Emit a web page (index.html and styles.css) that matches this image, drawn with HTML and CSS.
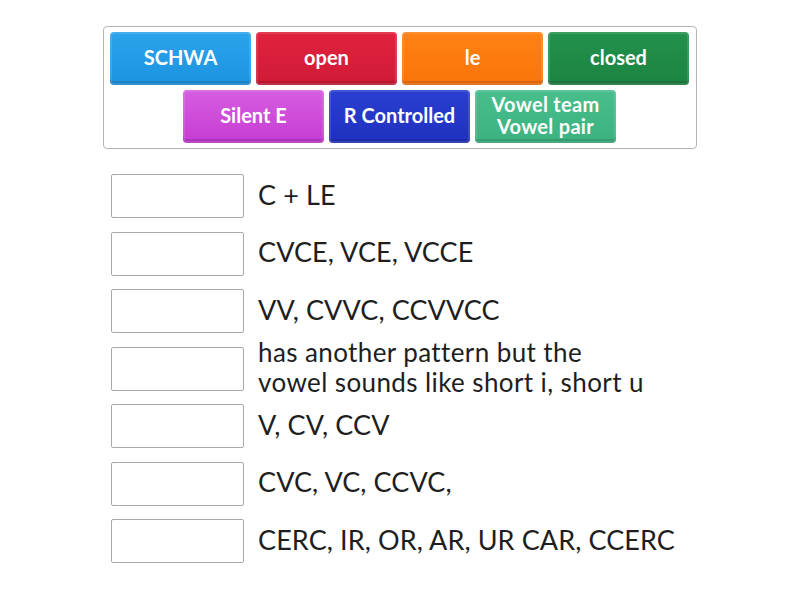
FILE: index.html
```html
<!DOCTYPE html>
<html lang="en">
<head>
    <meta charset="UTF-8">
    <meta name="viewport" content="width=device-width, initial-scale=1.0">
    <title>Match up</title>
    <link rel="stylesheet" href="styles.css">
</head>
<body>
    <div class="page">
        <!-- Bandeja de respostas -->
        <div class="tray">
            <div class="tray-row">
                <div class="tile blue">SCHWA</div>
                <div class="tile red">open</div>
                <div class="tile orange">le</div>
                <div class="tile green">closed</div>
            </div>
            <div class="tray-row">
                <div class="tile purple">Silent E</div>
                <div class="tile navy">R Controlled</div>
                <div class="tile teal">Vowel team<br>Vowel pair</div>
            </div>
        </div>

        <!-- Definicoes -->
        <div class="list">
            <div class="item">
                <div class="slot"></div>
                <div class="label">C + LE</div>
            </div>
            <div class="item">
                <div class="slot"></div>
                <div class="label">CVCE, VCE, VCCE</div>
            </div>
            <div class="item">
                <div class="slot"></div>
                <div class="label">VV, CVVC, CCVVCC</div>
            </div>
            <div class="item">
                <div class="slot"></div>
                <div class="label two-lines">has another pattern but the<br>vowel sounds like short i, short u</div>
            </div>
            <div class="item">
                <div class="slot"></div>
                <div class="label">V, CV, CCV</div>
            </div>
            <div class="item">
                <div class="slot"></div>
                <div class="label">CVC, VC, CCVC,</div>
            </div>
            <div class="item">
                <div class="slot"></div>
                <div class="label">CERC, IR, OR, AR, UR CAR, CCERC</div>
            </div>
        </div>
    </div>
</body>
</html>
```

FILE: styles.css
```css
body {
    font-family: Lato, "Open Sans", sans-serif;
    background-color: #fff;
    color: #1e1e1e;
    margin: 0;
    padding: 0;
}

.page {
    width: 594px;
    margin: 26px auto 0;
}

.tray {
    border: 1px solid #b4b4b4;
    border-radius: 4px;
    padding: 5px 7px 5px 6px;
    display: flex;
    flex-direction: column;
    gap: 5px;
}

.tray-row {
    display: flex;
    justify-content: center;
    gap: 5px;
}

.tile {
    width: 141px;
    height: 53px;
    box-sizing: border-box;
    border-radius: 4px;
    display: flex;
    align-items: center;
    justify-content: center;
    text-align: center;
    color: #fff;
    font-size: 20px;
    font-weight: bold;
    line-height: 22px;
    padding-bottom: 4px;
    box-shadow: inset 0 0 0 2px rgba(255, 255, 255, 0.12), inset 0 -4px 0 rgba(0, 0, 0, 0.12);
}

.tile.teal {
    letter-spacing: 0.3px;
}

.blue { background: linear-gradient(#2aa3ec, #1d93e0); }
.red { background: linear-gradient(#df223e, #d11a36); }
.orange { background: linear-gradient(#ff8216, #fa740a); }
.green { background: linear-gradient(#22914b, #1c8441); }
.purple { background: linear-gradient(#d65ee0, #c63bd3); }
.navy { background: linear-gradient(#2a3fd0, #1f30bf); }
.teal { background: linear-gradient(#48be8c, #3bb27f); }

.list {
    margin-top: 25px;
    padding-left: 8px;
    display: flex;
    flex-direction: column;
    gap: 13.5px;
}

.item {
    display: flex;
    align-items: center;
    height: 44px;
}

.slot {
    width: 133px;
    height: 44px;
    box-sizing: border-box;
    border: 1px solid #a9a9a9;
    border-radius: 2px;
    flex-shrink: 0;
}

.label {
    margin-left: 14px;
    margin-bottom: 3px;
    font-size: 27px;
    letter-spacing: 0.1px;
    line-height: 30px;
    white-space: nowrap;
}

.label.two-lines {
    font-size: 26px;
    letter-spacing: 0.4px;
}
```
